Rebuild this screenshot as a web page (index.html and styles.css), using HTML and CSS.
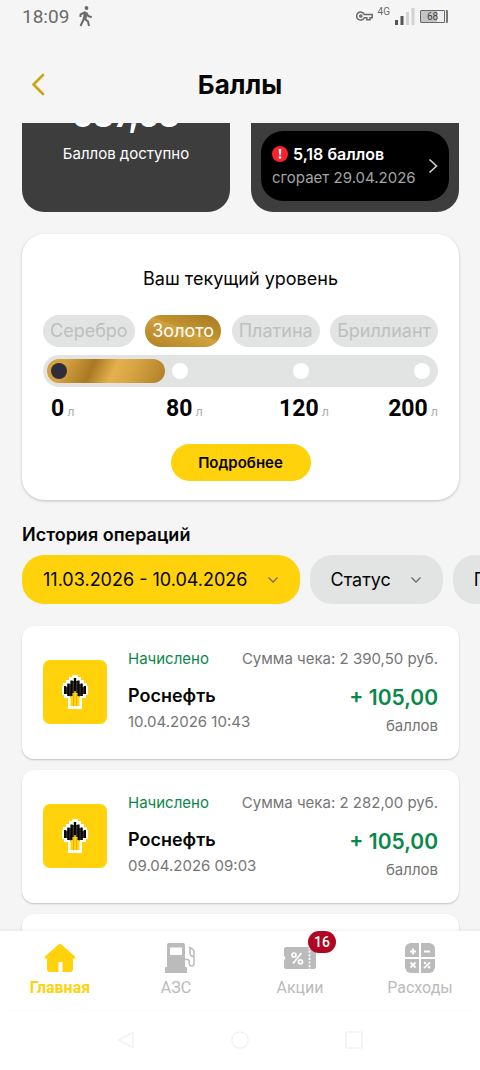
FILE: index.html
```html
<!DOCTYPE html>
<html lang="ru">
<head>
<meta charset="utf-8">
<meta name="viewport" content="width=device-width, initial-scale=1">
<title>Баллы</title>
<link rel="stylesheet" href="styles.css">
</head>
<body>
<svg class="defs" width="0" height="0" aria-hidden="true">
  <symbol id="rosneft" viewBox="0 0 26 34">
    <path fill="#fff" d="M10 2V0h6v2h3v3h3v3h3v3h1v9h-2v3h-4v11H6V23H2v-3H0v-9h1V8h3V5h3V2z"/>
    <path fill="#4a4634" d="M3 12h20v7H3zM6 9h14v12H6zM9 6h8v12H9z"/>
    <path fill="#050507" d="M2 11h2.300v8H2zM5.200 8.500h2.300v12.500H5.200zM8.400 5.500h2.300V22H8.400zM11.800 3h2.400v14h-2.400zM15.300 5.500h2.300V22h-2.300zM18.500 8.500h2.300V21h-2.300zM21.700 11H24v8h-2.300z"/>
    <path fill="#ffd20b" d="M8.500 21h2v-3h1.800v-2h1.400v2h1.800v3h2v10h-9z"/>
    <path stroke="#d9ae06" stroke-width=".7" d="M11.500 19v12M14.500 19v12"/>
  </symbol>
  <symbol id="chevron" viewBox="0 0 12 8"><path d="M1.500 1.500 6 6l4.500-4.500" fill="none" stroke="#6f6d60" stroke-width="1.300"/></symbol>
</svg>
<div class="app">
  <div class="status">
    <span class="time">18:09</span>
    <svg class="walk" width="14" height="21" viewBox="0 0 14 21" fill="none" stroke="#6b6b6b" stroke-width="2" stroke-linejoin="round"><circle cx="7.500" cy="2" r="1.900" fill="#6b6b6b" stroke="none"/><path d="M1.500 11V8.500L6 6.200 4.800 13 1.500 20M5.200 12.500l3.800 3 1 4.500M7.200 6.500l2 3.500 3.500 1.200"/><path d="m6 6-1.200 7 2.500 1 .9-6z" fill="#6b6b6b" stroke="none"/></svg>
    <span class="space"></span>
    <svg width="17" height="10" viewBox="0 0 17 10" fill="none" stroke="#686868" stroke-width="1.500"><path d="M8.300 3.500A4 4 0 1 0 8.300 6.700H10.800V8.800H14V6.700H16.200V3.500Z"/><circle cx="4.800" cy="5" r="1.100"/></svg>
    <span class="net">4G</span>
    <svg class="signal" width="20" height="17" viewBox="0 0 20 17"><path fill="#555" d="M0 12h3v5H0zM5.500 8h3v9h-3z"/><path fill="#d2d2d2" d="M11 4h3v13h-3zM16.500 0h3v17h-3z"/></svg>
    <span class="battery">68</span>
  </div>
  <header class="header">
    <button class="back" aria-label="Назад"><svg width="14" height="23" viewBox="0 0 14 23"><path d="M12 2 2.500 11.500 12 21" fill="none" stroke="#cba411" stroke-width="2.600" stroke-linecap="round" stroke-linejoin="round"/></svg></button>
    <h1>Баллы</h1>
  </header>
  <main class="content">
    <section class="balance">
      <div class="tile tile-points"><strong>537,63</strong><span>Баллов доступно</span></div>
      <div class="tile">
        <button class="expiry">
          <span class="expiry-text">
            <span class="expiry-top"><svg width="16" height="16" viewBox="0 0 16 16"><circle cx="8" cy="8" r="8" fill="#f9222f"/><path d="M6.700 3h2.600l-.5 6.200H7.200z" fill="#fff"/><circle cx="8" cy="11.600" r="1.300" fill="#fff"/></svg><b>5,18 баллов</b></span>
            <span class="expiry-date">сгорает 29.04.2026</span>
          </span>
          <svg width="10" height="16" viewBox="0 0 10 16"><path d="m1.500 1.500 7 6.500-7 6.500" fill="none" stroke="#d4d4d4" stroke-width="1.600"/></svg>
        </button>
      </div>
    </section>

    <section class="level">
      <h2>Ваш текущий уровень</h2>
      <div class="chips">
        <span class="chip">Серебро</span><span class="chip chip-gold">Золото</span><span class="chip">Платина</span><span class="chip">Бриллиант</span>
      </div>
      <div class="track">
        <div class="fill"></div>
        <div class="dots"><i class="dot dot-on"></i><i class="dot"></i><i class="dot"></i><i class="dot"></i></div>
      </div>
      <div class="marks">
        <span><b>0</b> л</span><span><b>80</b> л</span><span><b>120</b> л</span><span><b>200</b> л</span>
      </div>
      <button class="more">Подробнее</button>
    </section>

    <h2 class="section-title">История операций</h2>
    <div class="filters">
      <button class="filter filter-on">11.03.2026 - 10.04.2026<svg width="12" height="8"><use href="#chevron"/></svg></button>
      <button class="filter">Статус<svg width="12" height="8"><use href="#chevron"/></svg></button>
      <button class="filter">П</button>
    </div>

    <article class="op">
      <div class="logo"><svg width="26" height="34"><use href="#rosneft"/></svg></div>
      <div class="op-main"><span class="state">Начислено</span><h3>Роснефть</h3><time>10.04.2026 10:43</time></div>
      <div class="op-sum"><span>Сумма чека: 2 390,50 руб.</span><strong>+ 105,00</strong><span>баллов</span></div>
    </article>
    <article class="op">
      <div class="logo"><svg width="26" height="34"><use href="#rosneft"/></svg></div>
      <div class="op-main"><span class="state">Начислено</span><h3>Роснефть</h3><time>09.04.2026 09:03</time></div>
      <div class="op-sum"><span>Сумма чека: 2 282,00 руб.</span><strong>+ 105,00</strong><span>баллов</span></div>
    </article>
    <article class="op"></article>
  </main>

  <nav class="tabs">
    <a href="#" class="tab tab-on"><svg width="32" height="30" viewBox="0 0 32 30" fill="currentColor"><path d="M14.500 1.600a2.500 2.500 0 0 1 3 0L31 13.500c1 1 .6 2-.8 2H29v10.500a3 3 0 0 1-3 3h-7.500V19h-4v10H6a3 3 0 0 1-3-3V15.500H1.800c-1.400 0-1.800-1-.8-2z"/></svg><span>Главная</span></a>
    <a href="#" class="tab tab-fuel"><svg width="30" height="30" viewBox="0 0 30 30" fill="currentColor"><path fill-rule="evenodd" d="M4 0h14a2 2 0 0 1 2 2v22h1a1 1 0 0 1 1 1v5H0v-5a1 1 0 0 1 1-1h1V2a2 2 0 0 1 2-2zm1 4.500V12h12V4.500z"/><path d="M20 16.500h2.500c1 0 1.800.6 1.800 1.800v2.500c0 3 4.700 3 4.700 0V9c0-1-.5-2-1.200-2.700L24 3.800M25 5v5c0 2 1 3.500 4 3.500" fill="none" stroke="currentColor" stroke-width="1.500"/></svg><span>АЗС</span></a>
    <a href="#" class="tab"><span class="icon-wrap"><svg width="32" height="30" viewBox="0 0 32 30"><path fill="currentColor" d="M2 4h28a2 2 0 0 1 2 2v18a2 2 0 0 1-2 2H2a2 2 0 0 1-2-2v-7a2.200 2.200 0 0 0 0-4V6a2 2 0 0 1 2-2z"/><g fill="none" stroke="#fff" stroke-width="1.700"><path d="M17.500 10 9 20.500"/><circle cx="10" cy="12" r="2"/><circle cx="16.500" cy="18.800" r="2"/><path d="M25.500 4v22" stroke-dasharray="2.200 1.400"/></g></svg><em class="badge">16</em></span><span>Акции</span></a>
    <a href="#" class="tab"><svg width="30" height="30" viewBox="0 0 30 30"><rect width="30" height="30" rx="6" fill="currentColor"/><g stroke="#fff" fill="none"><path d="M15 0v30M0 15h30" stroke-width="2"/><path stroke-width="1.800" d="M5 8.500h6M8 5.500v6M19 8.500h6M5.500 19.500l5 5M10.500 19.500l-5 5M25 19.500l-6 5.500"/></g><g fill="#fff"><circle cx="20" cy="20" r="1.200"/><circle cx="24" cy="24.300" r="1.200"/></g></svg><span>Расходы</span></a>
  </nav>
  <div class="system" aria-hidden="true">
    <svg width="18" height="18" viewBox="0 0 18 18"><path d="M16 1.500v15L1.500 9z"/></svg>
    <svg width="20" height="18" viewBox="0 0 20 18"><circle cx="10" cy="9" r="8"/></svg>
    <svg width="18" height="18" viewBox="0 0 18 18"><rect x="1" y="1" width="16" height="16" rx="1"/></svg>
  </div>
</div>
</body>
</html>
```
FILE: styles.css
```css
* { box-sizing: border-box; }
body { margin: 0; background: #f5f5f5; color: #050505; font-family: Inter, "Noto Sans", sans-serif; }
button { border: 0; padding: 0; font: inherit; color: inherit; background: none; cursor: pointer; }
h1, h2, h3 { margin: 0; }
svg { display: block; flex: none; }
.defs { position: absolute; }
.app { height: 100vh; display: flex; flex-direction: column; }

.status { flex: none; display: flex; align-items: center; height: 32px; padding: 0 35px 0 22px; font-family: Roboto, sans-serif; color: #6b6b6b; }
.time { font-size: 19px; margin-right: 10px; }
.space { flex: 1; }
.net { font-size: 10px; line-height: 12px; margin: 0 5px; align-self: flex-start; padding-top: 6px; }
.battery { width: 25px; height: 13px; margin-left: 5px; border: 1px solid #686868; border-radius: 1px; background: linear-gradient(90deg, #c4c4c4 68%, #eee 68%); color: #444; font-size: 10px; line-height: 11px; text-align: center; box-shadow: 1px 0 0 #f5f5f5, 3px 0 0 #777; }

.header { flex: none; display: grid; grid-template-columns: 48px 1fr 48px; align-items: center; height: 91px; padding: 14px 8px 0; }
.back { display: flex; justify-content: center; padding: 8px 8px 8px 20px; }
.header h1 { font-size: 26px; line-height: 32px; text-align: center; font-weight: 700; }

.content { flex: 1; min-height: 0; overflow: hidden; padding: 0 21px 0 22px; }

.balance { display: grid; grid-template: 89px / 1fr 1fr; gap: 21px; align-items: end; overflow: hidden; color: #fff; }
.tile { display: flex; flex-direction: column; justify-content: flex-end; height: 140px; padding: 11px 10px; border-radius: 22px; background: #3d3d3d; }
.tile-points { align-items: center; padding-bottom: 48px; font-size: 15px; line-height: 20px; }
.tile-points strong { margin-bottom: 8px; font-size: 32px; line-height: 40px; }
.expiry { display: flex; align-items: center; justify-content: space-between; height: 70px; padding: 0 11px; border-radius: 22px; background: #000; text-align: left; white-space: nowrap; }
.expiry-text { display: flex; flex-direction: column; font-size: 16px; line-height: 24px; }
.expiry-top { display: flex; align-items: center; gap: 5px; }
.expiry-top b { font-weight: 600; }
.expiry-date { color: #a4a4a4; font-size: 15px; }

.level { display: flex; flex-direction: column; margin-top: 22px; padding: 32px 21px 19px; border-radius: 22px; background: #fff; box-shadow: 0 1px 3px rgba(0, 0, 0, .22); }
.level h2 { font-size: 18px; line-height: 26px; font-weight: 400; text-align: center; }
.chips { display: flex; justify-content: space-between; margin-top: 23px; }
.chip { height: 32px; padding: 0 7px; border-radius: 16px; background: #e2e4e3; color: #bdbfbe; font-size: 18px; line-height: 32px; }
.chip-gold { color: #fff; background: linear-gradient(200deg, #a47925 0%, #c4942f 46%, transparent 46%), linear-gradient(22deg, #b08023, #d5a642 60%); }
.track { display: grid; align-items: center; height: 32px; margin-top: 8px; padding: 0 4px; border-radius: 16px; background: #e2e4e3; }
.fill, .dots { grid-area: 1 / 1; }
.fill { width: 118px; height: 24px; border-radius: 12px; background: linear-gradient(115deg, #cda03b 0%, #d6a440 15%, #a97822 38%, #e5b14d 56%, #d8a543 70%, #ad7e25 100%); }
.dots { display: flex; justify-content: space-between; padding: 0 4px; }
.dot { width: 16px; height: 16px; border-radius: 50%; background: #fff; }
.dot-on { background: #2e2d3c; }
.marks { display: grid; grid-template-columns: 115fr 113fr 109fr auto; height: 28px; padding-left: 8px; margin-top: 8px; font-size: 12px; line-height: 28px; color: #aaa; }
.marks b { font-family: Roboto, sans-serif; font-size: 23px; color: #000; }
.more { align-self: center; width: 140px; height: 37px; margin-top: 21px; border-radius: 19px; background: #ffd20b; font-size: 15px; font-weight: 600; }

.section-title { margin-top: 22px; font-size: 18px; line-height: 26px; font-weight: 600; }
.filters { display: flex; gap: 10px; margin: 7px -21px 22px 0; overflow: hidden; }
.filter { flex: none; display: flex; align-items: center; gap: 19px; height: 49px; padding: 0 21px; border-radius: 22px; background: #e2e4e3; font-size: 18px; white-space: nowrap; }
.filter-on { background: #ffd20b; }

.op { display: flex; min-height: 133px; margin-bottom: 11px; padding: 22px 21px; border-radius: 12px; background: #fff; box-shadow: 0 1px 2px rgba(0, 0, 0, .22); color: #757575; font-size: 15px; line-height: 22px; white-space: nowrap; }
.logo { flex: none; display: grid; place-items: center; width: 64px; height: 64px; margin-top: 12px; border-radius: 7px; background: #ffd20b; }
.op-main { display: flex; flex-direction: column; width: 0; margin-left: 21px; }
.state { color: #0b8849; }
.op h3 { margin: 13px 0 2px; color: #050505; font-size: 18px; line-height: 26px; font-weight: 600; }
.op-sum { display: flex; flex-direction: column; align-items: flex-end; margin-left: auto; }
.op-sum strong { margin: 14px 0 3px; color: #0b8849; font-size: 21px; line-height: 28px; font-weight: 600; }

.tabs { flex: none; display: grid; grid-template-columns: repeat(4, 1fr); padding: 12px 0 0; height: 79px; background: #fff; box-shadow: 0 -1px 4px rgba(0, 0, 0, .06); position: relative; }
.tab { display: flex; flex-direction: column; align-items: center; gap: 5px; color: #bbb; font-family: Roboto, sans-serif; font-size: 16px; line-height: 20px; text-decoration: none; }
.tab-on { color: #ffd20b; font-weight: 700; }
.tab-fuel span { padding-right: 8px; }
.icon-wrap { position: relative; }
.badge { position: absolute; left: 24px; top: -12px; width: 28px; height: 22px; border-radius: 11px; background: #b00523; color: #fff; font-size: 14px; line-height: 22px; font-style: normal; font-weight: 500; text-align: center; }
.system { flex: none; display: flex; justify-content: space-between; height: 60px; padding: 21px 117px; background: #fff; }
.system svg { fill: none; stroke: #f2f2f2; stroke-width: 1.5; }
```
